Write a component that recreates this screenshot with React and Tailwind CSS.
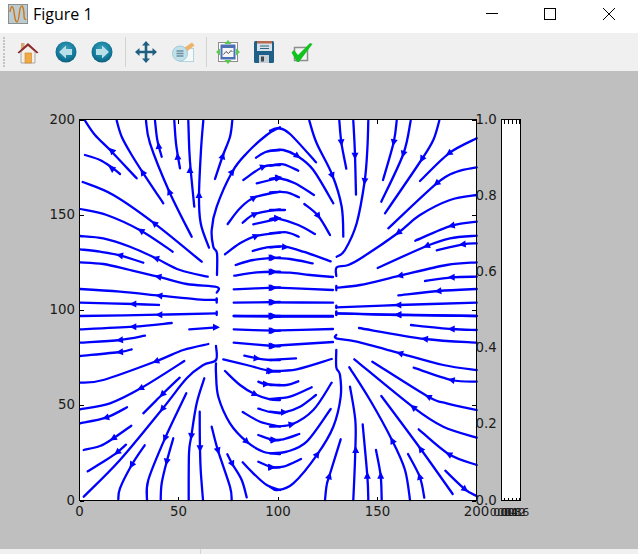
// Streamlines traced per plot quadrant, in 3x crop coordinates: [points, arrow]
// arrow = [x, y, dx, dy]
const topLeft = [
  [[45,32,75,75,125,125,200,205], [125,122,-1,-1]],
  [[45,135,90,150,125,172,150,192], [125,175,-1,-0.7]],
  [[140,32,155,80,185,135,218,187,280,280], [218,187,-0.6,-1]],
  [[38,216,130,255,253,340,395,455], [253,340,-1,-0.8]],
  [[30,297,110,315,213,362,308,425], [213,362,-1,-0.6]],
  [[228,32,240,100,298,245,365,380], [298,245,-0.4,-1]],
  [[255,32,262,90,275,140], [266,108,-0.1,-1]],
  [[313,32,318,100,330,175], [323,140,-0.1,-1]],
  [[355,32,358,120,362,180,373,290], [360,180,0,-1]],
  [[400,32,393,120,387,255,392,340,417,413], [387,255,0,-1]],
  [[487,32,480,80,458,138,435,207], [458,138,0.3,-1]],
  [[630,52,590,75,530,130,487,185,440,290,425,360,430,410,441,430,441,495], [487,185,0.6,-0.8]],
  [[558,143,590,125,630,120]],
  [[520,210,580,170,630,165], [580,170,1,-0.4]],
  [[560,220,630,203], [625,203,1,-0.2]],
  [[473,342,510,295,552,263,630,245], [552,263,1,-0.6]],
  [[518,338,555,312,630,298], [555,312,1,-0.5]],
  [[550,343,630,325], [622,325,1,-0.1]],
  [[465,433,510,400,558,378,630,368], [558,378,1,-0.4]],
  [[548,423,590,412,630,410]],
  [[497,465,550,450,630,442], [610,443,1,0]],
  [[493,497,560,487,630,485], [610,485,1,0]],
  [[491,538,630,532], [610,533,1,0]],
  [[491,578,630,576], [610,577,1,0]],
  [[491,618,630,620], [610,619,1,0]],
  [[30,418,90,425,150,436,220,458], [150,436,-1,-0.2]],
  [[30,378,100,385,180,410,258,445,330,480,413,500], [258,445,-1,-0.3]],
  [[30,457,100,462,180,480,265,500,350,522,440,531,440,548], [265,500,-1,-0.2]],
  [[30,537,150,545,268,557,380,568,440,570], [268,557,-1,-0.1]],
  [[440,565,440,578]],
  [[30,578,190,582,267,585], [190,582,-1,0]],
  [[30,618,268,614,440,610], [268,614,-1,0]],
  [[440,605,440,615]],
];

const topRight = [
  [[0,62,25,55,60,72,138,157]],
  [[0,122,40,120,82,138,130,180,190,280], [82,138,1,0.7]],
  [[0,167,40,163,85,182]],
  [[0,207,25,204,75,220,132,255], [25,204,1,0.1]],
  [[0,247,50,247,87,262]],
  [[0,300,45,300]],
  [[103,282,145,318,180,375], [145,318,0.7,1]],
  [[0,328,22,325,85,345,135,372], [22,325,1,0]],
  [[0,370,50,367,86,380]],
  [[0,412,45,410,100,425,182,454], [45,411,1,0.1]],
  [[0,443,60,447,128,460], [5,443,1,0]],
  [[0,486,60,488,120,495,189,501], [5,486,1,0]],
  [[0,532,189,540], [5,533,1,0]],
  [[0,577,189,578], [5,577,1,0]],
  [[0,620,189,620], [5,619,1,0]],
  [[118,32,140,100,187,195,215,290,220,380], [187,197,0.4,1]],
  [[208,32,214,97,229,176], [214,97,0.1,1]],
  [[250,32,255,135,258,254], [255,137,0,1]],
  [[295,32,292,120,284,213,260,340,225,420,200,440], [284,213,-0.1,1]],
  [[380,32,371,97,339,210], [371,97,-0.2,1]],
  [[422,32,400,132,334,275], [400,132,-0.3,1]],
  [[508,32,490,90,456,147,345,310], [456,147,-0.6,1]],
  [[620,85,537,130,450,213], [537,130,-1,0.7]],
  [[620,172,560,185,500,220,355,355], [500,220,-1,0.8]],
  [[620,255,540,270,450,315,385,368,280,440,235,465,200,472,199,498], [385,368,-1,0.7]],
  [[620,335,545,347,436,392], [545,347,-1,0.2]],
  [[620,377,540,385,470,408,323,474], [470,408,-1,0.4]],
  [[620,400,578,403,500,421], [578,403,-1,0.1]],
  [[620,457,530,465,390,497,270,525,199,533], [390,497,-1,0.2]],
  [[199,528,199,541]],
  [[620,500,545,502,465,513], [545,502,-1,0]],
  [[620,537,505,543,385,556], [505,543,-1,0.1]],
  [[620,578,385,585,199,592], [385,585,-1,0]],
  [[199,587,199,594]],
  [[620,618,385,615,199,610], [385,614,-1,0]],
  [[199,605,199,615]],
];

const bottomLeft = [
  [[30,58,190,50,305,39], [190,50,-1,0]],
  [[358,58,440,52], [438,52,1,0]],
  [[30,98,150,90,225,77], [150,90,-1,0.1]],
  [[30,138,150,126,185,118], [150,126,-1,0.1]],
  [[30,218,100,210,258,154,340,120,415,102], [258,154,-1,0.4]],
  [[30,298,120,280,212,235,343,153], [212,235,-1,0.5]],
  [[30,340,108,323,171,292], [108,323,-1,0.3]],
  [[220,310,277,253,329,203], [277,253,-1,1]],
  [[41,420,90,408,130,385,184,347], [130,385,-1,0.6]],
  [[53,484,100,455,142,427,168,404], [142,427,-1,0.8]],
  [[41,560,150,450,277,297,350,205,400,165,438,150,438,108], [277,297,-0.8,1]],
  [[145,568,150,535,185,465,224,406], [185,465,-0.6,1]],
  [[231,570,235,510,285,385,349,250], [285,385,-0.4,1]],
  [[272,570,275,520,290,455,310,385], [290,455,-0.2,1]],
  [[356,570,357,430,364,378,380,280,403,205], [364,378,-0.1,1]],
  [[399,570,392,480,390,415,389,305], [390,415,0,1]],
  [[485,570,480,530,444,422,425,350], [444,422,0.3,1]],
  [[530,562,515,510,487,462,472,433], [487,462,0.5,1]],
  [[630,540,590,525,550,490,518,457]],
  [[438,160,438,190,445,260,480,340,530,395,580,425,630,432], [530,395,1,0.9]],
  [[465,183,510,225,555,253,600,268,630,270], [555,253,1,0.5]],
  [[460,148,530,165,598,183,630,185], [598,183,1,0.1]],
  [[523,137,560,145,600,150,630,150], [560,145,1,0.1]],
  [[491,98,610,108,630,109], [610,108,1,0]],
  [[491,58,610,62,630,62], [610,62,1,0]],
  [[491,18,630,18], [610,18,1,0]],
  [[565,215,585,222,630,225], [588,222,1,0]],
  [[565,296,600,306,630,310]],
  [[518,306,570,335,630,350]],
  [[565,375,610,390,630,390], [610,390,1,0]],
  [[565,455,605,472,630,472], [605,472,1,0]],
];

const bottomRight = [
  [[0,18,189,18], [5,18,1,0]],
  [[0,62,189,57], [5,62,1,0]],
  [[0,108,189,96], [5,108,1,0]],
  [[0,150,78,145]],
  [[0,183,80,178,185,147], [3,183,1,0]],
  [[0,225,50,225,85,214]],
  [[0,267,60,260,125,232]],
  [[0,305,42,307,90,290,138,255], [42,307,1,0]],
  [[0,350,65,343,130,300,185,218], [65,343,1,-0.2]],
  [[0,390,40,388,88,372], [12,390,1,0]],
  [[0,430,50,425,110,395,182,297]],
  [[0,472,40,470,93,447], [3,472,1,0]],
  [[199,120,199,172,210,195,212,260,190,350,142,433,70,520,22,540,0,530], [142,433,0.7,-1]],
  [[165,570,170,525,178,498,212,388], [178,498,0.3,-1]],
  [[250,570,256,420,256,330,240,230], [257,420,0,-1]],
  [[295,570,292,497,278,343], [292,497,0,-1]],
  [[335,570,332,497,318,420], [332,497,0,-1]],
  [[420,570,405,480,367,392,300,270,238,172], [367,392,-0.5,-1]],
  [[463,563,449,500,414,432], [449,500,-0.3,-1]],
  [[548,552,452,417,334,258], [452,417,-0.7,-1]],
  [[620,465,537,433,446,358], [537,433,-1,-0.5]],
  [[620,383,520,350,430,292,253,148], [430,292,-1,-0.8]],
  [[620,300,530,280,475,260,307,155], [475,260,-1,-0.5]],
  [[620,215,545,210,431,173], [545,210,-1,-0.2]],
  [[620,180,520,165,390,130,260,95,199,85,199,75], [390,130,-1,-0.3]],
  [[620,98,465,87,267,54], [465,87,-1,-0.1]],
  [[620,60,545,57,423,45], [545,57,-1,0]],
  [[620,18,385,14,199,10], [385,14,-1,0]],
  [[199,5,199,15]],
  [[620,558,585,538,526,482], [585,538,1,0.8]],
];

// catmull-rom through the traced points
function smoothPath(p, ox, oy) {
  const pts = [];
  for (let i = 0; i < p.length; i += 2) pts.push([ox + p[i] / 3, oy + p[i + 1] / 3]);
  let d = `M${pts[0][0].toFixed(1)} ${pts[0][1].toFixed(1)}`;
  for (let i = 0; i < pts.length - 1; i++) {
    const a = pts[Math.max(i - 1, 0)];
    const b = pts[i];
    const c = pts[i + 1];
    const e = pts[Math.min(i + 2, pts.length - 1)];
    const c1 = [b[0] + (c[0] - a[0]) / 6, b[1] + (c[1] - a[1]) / 6];
    const c2 = [c[0] - (e[0] - b[0]) / 6, c[1] - (e[1] - b[1]) / 6];
    d += `C${c1[0].toFixed(1)} ${c1[1].toFixed(1)} ${c2[0].toFixed(1)} ${c2[1].toFixed(1)} ${c[0].toFixed(1)} ${c[1].toFixed(1)}`;
  }
  return d;
}

function arrowPoints([x, y, dx, dy], ox, oy) {
  const len = Math.hypot(dx, dy);
  const ux = dx / len;
  const uy = dy / len;
  const cx = ox + x / 3;
  const cy = oy + y / 3;
  const tip = [cx + ux * 4, cy + uy * 4];
  const l = [cx - ux * 3 - uy * 3.5, cy - uy * 3 + ux * 3.5];
  const r = [cx - ux * 3 + uy * 3.5, cy - uy * 3 - ux * 3.5];
  return [tip, l, r].map((q) => q.map((n) => n.toFixed(1)).join(',')).join(' ');
}

function Lines({ data, ox, oy }) {
  return data.map(([pts, arrow], i) => (
    <g key={i}>
      <path d={smoothPath(pts, ox, oy)} fill="none" stroke="#0000ff" strokeWidth="2.3" strokeLinecap="round" strokeLinejoin="round" />
      {arrow && <polygon points={arrowPoints(arrow, ox, oy)} fill="#0000ff" />}
    </g>
  ));
}

const xTicks = [[79.5, '0'], [178.5, '50'], [278, '100'], [377.5, '150'], [476.5, '200']];
const yTicks = [[501, '0'], [405.5, '50'], [310.5, '100'], [215.5, '150'], [120, '200']];
const barTicks = [[501, '0.0'], [424.5, '0.2'], [348, '0.4'], [272, '0.6'], [196, '0.8'], [120, '1.0']];
const barXTicks = [[504.5, '0.00'], [508, '0.04'], [512, '0.08'], [516, '0.12'], [519.5, '0.16']];

function Chart() {
  return (
    <svg viewBox="0 71 638 478" className="block w-[638px] h-[478px]" style={{ fontFamily: '"DejaVu Sans", sans-serif' }}>
      <rect x="79.5" y="120" width="397" height="381" fill="#ffffff" />
      <rect x="501.5" y="120" width="19" height="381" fill="#ffffff" />
      <Lines data={topLeft} ox={70} oy={110} />
      <Lines data={topRight} ox={270} oy={110} />
      <Lines data={bottomLeft} ox={70} oy={310} />
      <Lines data={bottomRight} ox={270} oy={310} />

      <g stroke="#000000" strokeWidth="1" fill="none" shapeRendering="crispEdges">
        <rect x="79.5" y="119.5" width="397" height="381" />
        <rect x="501.5" y="119.5" width="19" height="381" />
        {xTicks.map(([x]) => (
          <path key={x} d={`M${x} 120v4M${x} 501v-4`} />
        ))}
        {yTicks.map(([y]) => (
          <path key={y} d={`M80 ${y}h4M476 ${y}h-4`} />
        ))}
        {barXTicks.map(([x]) => (
          <path key={x} d={`M${x} 120v3.5M${x} 501v-3.5`} />
        ))}
      </g>

      <g fontSize="13.33" fill="#1a1a1a">
        {xTicks.map(([x, t]) => (
          <text key={t} x={x} y="516" textAnchor="middle">{t}</text>
        ))}
        {yTicks.map(([y, t]) => (
          <text key={t} x="75" y={y + 3.7} textAnchor="end">{t}</text>
        ))}
        {barTicks.map(([y, t]) => (
          <text key={t} x="475.5" y={y + 3.5}>{t}</text>
        ))}
      </g>
      <g fontSize="11" fill="#1a1a1a" transform="translate(-2.500 0)">
        {barXTicks.map(([x, t]) => (
          <text key={t} x={x} y="515.5" textAnchor="middle">{t}</text>
        ))}
      </g>
    </svg>
  );
}

function FigureIcon() {
  return (
    <svg width="20" height="20" viewBox="0 0 20 20" className="shrink-0">
      <rect x="0.5" y="0.5" width="19" height="19" fill="#bccbd0" stroke="#8a8f92" />
      <path d="M2 8C3 1 5 1 6 8S7.500 18 9 18s2-6 2.500-10S13 2 14 2s2 5 2 9 1 5 2 4" fill="none" stroke="#c9781c" strokeWidth="1.4" />
    </svg>
  );
}

function HomeIcon() {
  return (
    <svg width="24" height="24" viewBox="0 0 24 24" className="shrink-0">
      <rect x="5" y="3" width="3.500" height="7" fill="#d8a878" />
      <path d="M5 11.500 12 5l7 6.500V23H5Z" fill="#f2efe8" stroke="#9a9a9a" strokeWidth="0.8" />
      <rect x="9" y="13" width="6.500" height="10" fill="#f1a942" stroke="#c77f2a" strokeWidth="0.6" />
      <path d="M1.500 12.500 12 3l10.500 9.500-1.500 1L12 6l-9 7.500Z" fill="#8e2c2c" />
    </svg>
  );
}

function NavIcon({ id, back }) {
  return (
    <svg width="24" height="24" viewBox="0 0 24 24" className="shrink-0">
      <defs>
        <radialGradient id={id} cx="50%" cy="38%" r="62%">
          <stop offset="0%" stopColor="#3fa6c0" />
          <stop offset="70%" stopColor="#14799a" />
          <stop offset="100%" stopColor="#0d5f7c" />
        </radialGradient>
      </defs>
      <circle cx="12" cy="12" r="10.500" fill={`url(#${id})`} />
      {back ? (
        <path d="M5 12l7-6.500V9h6v6h-6v3.500Z" fill="#b9dfe9" />
      ) : (
        <path d="M19 12l-7-6.500V9H6v6h6v3.500Z" fill="#b9dfe9" />
      )}
    </svg>
  );
}

function MoveIcon() {
  return (
    <svg width="24" height="24" viewBox="0 0 24 24" className="shrink-0">
      <path
        d="M12 1l4 4.500h-2.700v5.200h5.200V8l4.500 4-4.500 4v-2.700h-5.200v5.200H16L12 23l-4-4.500h2.700v-5.200H5.500V16L1 12l4.500-4v2.700h5.200V5.500H8Z"
        fill="#1f5f80"
      />
    </svg>
  );
}

function ConfigureIcon() {
  return (
    <svg width="24" height="24" viewBox="0 0 24 24" className="shrink-0">
      <rect x="8.500" y="8.500" width="14" height="13" fill="#f4fafb" stroke="#b5d3dc" />
      <path d="M10 10 21 2.500l2.500 3-10 8Z" fill="#efb26c" />
      <circle cx="9" cy="13.500" r="7.500" fill="#c2e0e9" stroke="#9ccbd8" />
      <path d="M5.500 11h7M5.500 13.500h7M5.500 16h7" stroke="#6d8ea0" strokeWidth="1.3" />
    </svg>
  );
}

function FitIcon() {
  return (
    <svg width="24" height="24" viewBox="0 0 24 24" className="shrink-0">
      <rect x="2.500" y="2.500" width="19" height="19" fill="#ffffff" stroke="#8d8d8d" />
      <rect x="4.500" y="4.500" width="15" height="15" fill="#4a6fb5" />
      <rect x="6.500" y="8" width="11" height="9" fill="#f6f6f6" />
      <path d="M7.500 14.500l2.500-3 2.500 2 2.500-3 1.500 1.500" fill="none" stroke="#444" strokeWidth="0.9" />
      <path d="M12 0l3.500 4h-7ZM12 24l-3.500-4h7ZM0 12l4-3.500v7ZM24 12l-4 3.500v-7Z" fill="#58c84e" />
    </svg>
  );
}

function SaveIcon() {
  return (
    <svg width="24" height="24" viewBox="0 0 24 24" className="shrink-0">
      <path d="M2 2.500A1.500 1.500 0 0 1 3.500 1h17A1.500 1.500 0 0 1 22 2.500v19a1.500 1.500 0 0 1-1.500 1.500h-17A1.500 1.500 0 0 1 2 21.500Z" fill="#1f6088" />
      <rect x="5" y="1" width="15" height="10" fill="#d5e2ea" />
      <rect x="5" y="1" width="15" height="2.500" fill="#b86a4e" />
      <path d="M8 6h9M8 8.500h9" stroke="#31627f" strokeWidth="1" />
      <rect x="7" y="15" width="10" height="8" fill="#c9ced2" />
      <rect x="9" y="16.500" width="3" height="5" fill="#3a4a55" />
    </svg>
  );
}

function CheckIcon() {
  return (
    <svg width="24" height="24" viewBox="0 0 24 24" className="shrink-0">
      <rect x="4.500" y="7.500" width="13" height="13" fill="#f4f4f4" stroke="#8d8d8d" strokeWidth="1.500" />
      <path d="M1.500 12.500 4 10l4 5L20 3l2.500 1L9 22h-2Z" fill="#12c21f" />
    </svg>
  );
}

function ToolbarGrip() {
  return (
    <div className="w-[3px] h-[31px] shrink-0 ml-[3px] flex flex-col justify-between">
      {Array.from({ length: 10 }).map((_, i) => (
        <div key={i} className="w-[2px] h-[2px] bg-[#c4c4c4]" />
      ))}
    </div>
  );
}

export default function App() {
  return (
    <div className="w-[638px] h-[554px] flex flex-col overflow-hidden bg-white">
      {/* Title bar */}
      <div className="h-[33px] shrink-0 flex items-center bg-white">
        <div className="ml-[8px] mb-[7px] mt-[1px]">
          <FigureIcon />
        </div>
        <span className="ml-[5px] mb-[6px] text-[16px] leading-none text-black" style={{ fontFamily: '"Open Sans", sans-serif' }}>
          Figure 1
        </span>
        <div className="ml-auto mr-[22px] mb-[6px] flex items-center">
          <svg width="14" height="14" viewBox="0 0 14 14">
            <path d="M1 6.500h12" stroke="#000" fill="none" />
          </svg>
          <svg width="14" height="14" viewBox="0 0 14 14" className="ml-[44px]">
            <rect x="1.500" y="1.500" width="11" height="11" stroke="#000" fill="none" />
          </svg>
          <svg width="14" height="14" viewBox="0 0 14 14" className="ml-[45px]">
            <path d="M1 1l12 12M13 1 1 13" stroke="#000" fill="none" />
          </svg>
        </div>
      </div>

      {/* Toolbar */}
      <div className="h-[38px] shrink-0 flex items-center bg-[#f0f0f0]">
        <ToolbarGrip />
        <div className="ml-[10px]"><HomeIcon /></div>
        <div className="ml-[14px]"><NavIcon id="navBack" back /></div>
        <div className="ml-[12px]"><NavIcon id="navForward" /></div>
        <div className="ml-[11px] w-px h-[30px] bg-[#d2d2d2]" />
        <div className="ml-[8px]"><MoveIcon /></div>
        <div className="ml-[13px]"><ConfigureIcon /></div>
        <div className="ml-[11px] w-px h-[30px] bg-[#d2d2d2]" />
        <div className="ml-[9px]"><FitIcon /></div>
        <div className="ml-[12px]"><SaveIcon /></div>
        <div className="ml-[14px]"><CheckIcon /></div>
      </div>

      {/* Figure canvas */}
      <div className="flex-1 bg-[#bfbfbf]">
        <Chart />
      </div>

      {/* Status bar */}
      <div className="h-[5px] shrink-0 bg-[#f0f0f0] flex">
        <div className="w-[201px] border-r border-[#d4d4d4]" />
      </div>
    </div>
  );
}
